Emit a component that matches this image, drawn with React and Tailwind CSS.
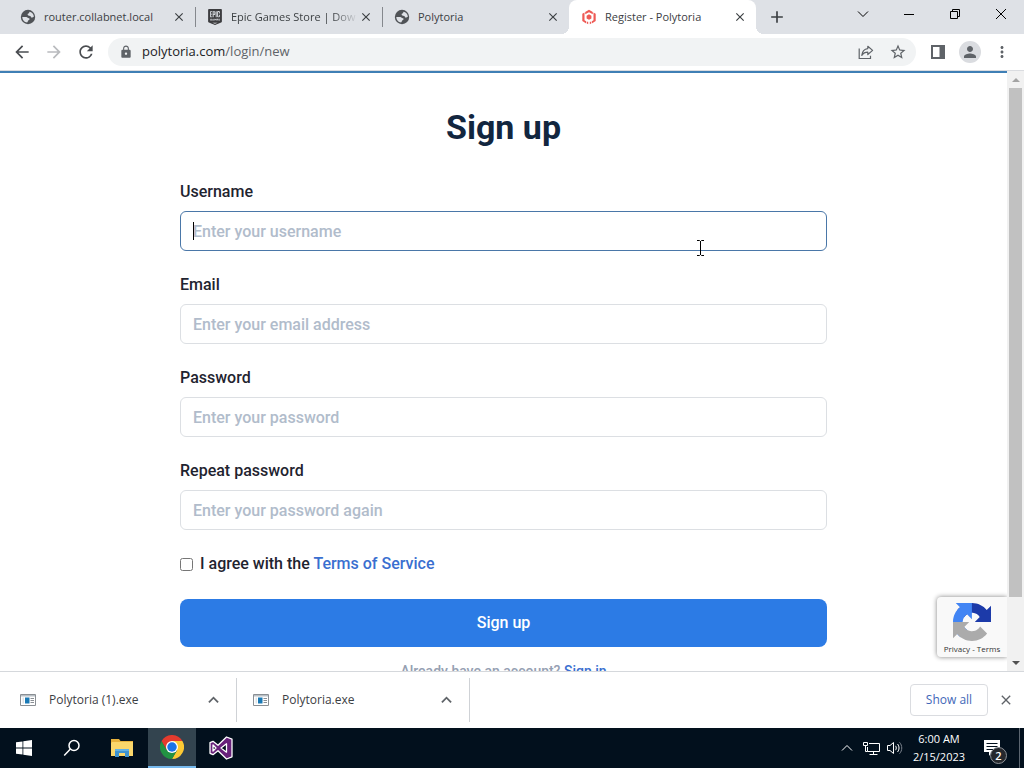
import { useState } from 'react'
import clsx from 'clsx'
import {
  MdArrowBack,
  MdArrowForward,
  MdRefresh,
  MdLock,
  MdStarBorder,
  MdMoreVert,
  MdClose,
  MdPerson,
  MdAdd,
} from 'react-icons/md'
import { SiEpicgames } from 'react-icons/si'

const GlobeIcon = () => (
  <svg viewBox="0 0 16 16" className="size-4 shrink-0" aria-hidden="true">
    <circle cx="8" cy="8" r="7.2" fill="#505357" />
    <path d="M9.300 2.800c2.500.4 4.300 2.300 4.600 4.700-.9.700-1.500 1.300-2.600 1-.6-.6-.2-1.300-1.200-1.600-1.200-.2-2.600-.4-2.500-1.600.1-1 1.400-.8 1.600-1.300z" fill="#dee1e6" />
    <path d="M2.300 8h3.900c1.300.1 1.600 1.200 2.700 1.300 1 .2.900 1.500-.1 1.700-1 .3-.6 1.500-1.700 2.500C4.500 13.200 2.300 11 2.300 8z" fill="#dee1e6" />
  </svg>
)

const PolytoriaIcon = () => (
  <svg viewBox="0 0 16 16" className="size-4 shrink-0" fill="#ee5a55" aria-hidden="true">
    <path d="M8 .8 11.800 3v2.300L8 3.200 4.200 5.300V3z" />
    <path d="M3.500 3.500v7.700l1.700 1v2.200L1.300 12V4.700zM12.500 3.500l2.200 1.200V12l-3.900 2.400v-2.200l1.700-1z" />
    <path d="M8 5.300 10.400 6.700v2.700L8 10.800 5.600 9.400V6.700z" />
    <path d="M5.900 12.700h1.300v2.500l-1.300-.7zM8.800 12.700h1.300v1.800l-1.300.7z" />
  </svg>
)

const ShareIcon = () => (
  <svg viewBox="0 0 16 16" className="size-4" fill="none" stroke="#5f6368" strokeWidth="1.2" aria-hidden="true">
    <path d="M1.2 4.500v10h11.300v-2.700" />
    <path d="M9.800 2.300 14.600 6.400 9.800 10.500V8.200C7 8.200 5.200 9.200 3.800 11.400 4.200 7.600 6.200 5 9.800 4.600z" strokeLinejoin="round" />
  </svg>
)

const SidePanelIcon = () => (
  <svg viewBox="0 0 14 14" className="size-3.5" aria-hidden="true">
    <path d="M1 1h12v12H1z" fill="none" stroke="#5f6368" strokeWidth="2" />
    <path d="M8.500 1H13v12H8.500z" fill="#5f6368" />
  </svg>
)

const ExeIcon = () => (
  <svg viewBox="0 0 16 16" className="size-4 shrink-0" aria-hidden="true">
    <path d="M.5 2.500h15v11H.5z" fill="#fff" stroke="#8a8f94" />
    <path d="M1 3h14v1.500H1z" fill="#b9bfc4" />
    <path d="M5 5.500h4.500v6H5z" fill="#1979b5" />
    <path d="M2.500 5.500H4v6H2.500z" fill="#dfe3e6" />
    <path d="M10.500 6.500h3.500M10.500 8.500h3.500M10.500 10.500h3.500" stroke="#8a8f94" />
  </svg>
)

const RecaptchaIcon = () => (
  <svg viewBox="0 0 64 64" className="size-[38px]" aria-hidden="true">
    <path
      fill="#1c3aa9"
      d="M64 31.955l-.033-1.370V4.687l-7.160 7.160C50.948 4.674 42.033.093 32.050.093c-10.400 0-19.622 4.960-25.458 12.640l11.736 11.860a15.550 15.550 0 0 1 4.754-5.334c2.050-1.600 4.952-2.906 8.968-2.906.485 0 .860.057 1.135.163 4.976.393 9.288 3.140 11.828 7.124l-8.307 8.307L64 31.953"
    />
    <path
      fill="#4285f4"
      d="M31.862.094l-1.370.033H4.594l7.160 7.160C4.580 13.147 0 22.060 0 32.046c0 10.400 4.960 19.622 12.640 25.458L24.500 45.768a15.550 15.550 0 0 1-5.334-4.754c-1.600-2.050-2.906-4.952-2.906-8.968 0-.485.057-.860.163-1.135.393-4.976 3.140-9.288 7.124-11.828l8.307 8.307L31.860.095"
    />
    <path
      fill="#ababab"
      d="M.001 32.045l.033 1.370v25.898l7.160-7.160c5.860 7.173 14.774 11.754 24.760 11.754 10.400 0 19.622-4.960 25.458-12.640l-11.736-11.860a15.550 15.550 0 0 1-4.754 5.334c-2.050 1.600-4.952 2.906-8.968 2.906-.485 0-.860-.057-1.135-.163-4.976-.393-9.288-3.140-11.828-7.124l8.307-8.307c-10.522.040-22.400.066-27.295-.005"
    />
  </svg>
)

const StartIcon = () => (
  <svg viewBox="0 0 16 16" className="size-4" fill="#fff" aria-hidden="true">
    <path d="M0 2.300 6.500 1.400v6.200H0zM7.300 1.300 16 0v7.600H7.300zM0 8.400h6.500v6.200L0 13.700zM7.300 8.400H16V16l-8.700-1.300z" />
  </svg>
)

const SearchIcon = () => (
  <svg viewBox="0 0 18 18" className="size-[18px]" fill="none" stroke="#fff" strokeWidth="1.500" aria-hidden="true">
    <circle cx="11" cy="6.500" r="5" />
    <path d="M7.400 10.100 1.200 16.500" />
  </svg>
)

const ExplorerIcon = () => (
  <svg viewBox="0 0 22 20" className="h-5 w-[22px]" aria-hidden="true">
    <path d="M0 1h8l1.500 2H22v15H0z" fill="#e8b23c" />
    <path d="M1 4h21v14H0V5z" fill="#fbd76b" />
    <path d="M4 11h14v8h-4v-4H8v4H4z" fill="#3f93cf" />
    <path d="M4 11h14v2H4z" fill="#62b1e4" />
  </svg>
)

const ChromeIcon = () => (
  <svg viewBox="0 0 48 48" className="size-6" aria-hidden="true">
    <path d="M24 12h20.800A24 24 0 0 1 24 48l10.400-18z" fill="#fcc934" />
    <path d="M3.200 12 13.600 30 24 36l10.400-6L24 48A24 24 0 0 1 3.200 12z" fill="#229342" />
    <path d="M3.200 12A24 24 0 0 1 44.800 12H24L13.600 30z" fill="#e33b2e" />
    <circle cx="24" cy="24" r="12" fill="#fff" />
    <circle cx="24" cy="24" r="9.500" fill="#1a73e8" />
  </svg>
)

const VisualStudioIcon = () => (
  <svg viewBox="0 0 24 24" className="size-6" aria-hidden="true">
    <path
      d="M17.500 1 9 9.300 4 5.300 1 6.700v10.600l3 1.400 5-4L17.500 23l5.500-2.200V3.200zM4 9l3 3-3 3zM17.500 7.800v8.400L12 12z"
      fill="#68217a"
      fillRule="evenodd"
      stroke="#fff"
      strokeWidth="1.300"
      strokeLinejoin="round"
    />
  </svg>
)

const NetworkIcon = () => (
  <svg viewBox="0 0 17 16" className="h-4 w-[17px]" fill="none" stroke="#fff" aria-hidden="true">
    <path d="M6 3.500h10.500v8h-12V7M10.500 11.500v3M6.500 14.500h8" />
    <path d="M.5 2.500h4v3h-4zM2.500 5.500v6h2" />
  </svg>
)

const SpeakerIcon = () => (
  <svg viewBox="0 0 16 16" className="size-4" fill="none" stroke="#fff" aria-hidden="true">
    <path d="M.5 5.500h2.500L6.500 2.500v11L3 10.500H.5z" />
    <path d="M8.500 5.800c1 1.300 1 3.100 0 4.400M10.500 4c2 2.300 2 5.700 0 8" />
    <path d="M12.500 2.300c3 3.200 3 8.200 0 11.400" stroke="#7b828c" />
  </svg>
)

const Chevron = ({ down, className }) => (
  <svg viewBox="0 0 12 8" className={clsx('h-2 w-3', className)} fill="none" stroke="currentColor" aria-hidden="true">
    <path d={down ? 'M1 1.500l5 5 5-5' : 'M1 6.500l5-5 5 5'} />
  </svg>
)

const tabs = [
  { title: 'router.collabnet.local', icon: <GlobeIcon /> },
  { title: 'Epic Games Store | Dow', icon: <SiEpicgames className="size-4 shrink-0 text-[#3c3c3f]" />, fade: true },
  { title: 'Polytoria', icon: <GlobeIcon /> },
  { title: 'Register - Polytoria', icon: <PolytoriaIcon />, active: true },
]

const fields = [
  { id: 'username', label: 'Username', type: 'text', placeholder: 'Enter your username' },
  { id: 'email', label: 'Email', type: 'email', placeholder: 'Enter your email address' },
  { id: 'password', label: 'Password', type: 'password', placeholder: 'Enter your password' },
  { id: 'repeat', label: 'Repeat password', type: 'password', placeholder: 'Enter your password again' },
]

const downloads = ['Polytoria (1).exe', 'Polytoria.exe']

const Tab = ({ tab, index }) => (
  <div
    className={clsx(
      'relative flex w-[187px] shrink-0 items-center pr-2 pl-3',
      tab.active && 'rounded-t-lg bg-white'
    )}
  >
    <button className="flex min-w-0 flex-1 items-center gap-2 text-left">
      {tab.icon}
      <span
        className={clsx(
          'flex-1 overflow-hidden text-[11px] leading-4 whitespace-nowrap',
          tab.fade && '[mask-image:linear-gradient(to_right,black_80%,transparent)]'
        )}
      >
        {tab.title}
      </span>
    </button>
    <button aria-label="Close tab" className="flex size-4 shrink-0 items-center justify-center">
      <MdClose className="size-3.5 text-[#3c4043]" />
    </button>
    {index < 2 && <span className="absolute -right-px h-5 w-px bg-[#85888d]" />}
    {tab.active && (
      <>
        <span className="absolute bottom-0 -left-2 size-2 bg-[radial-gradient(circle_at_top_left,transparent_8px,white_8px)]" />
        <span className="absolute -right-2 bottom-0 size-2 bg-[radial-gradient(circle_at_top_right,transparent_8px,white_8px)]" />
      </>
    )}
  </div>
)

function App() {
  const [values, setValues] = useState({ username: '', email: '', password: '', repeat: '' })
  const [agree, setAgree] = useState(false)

  const changeValue = (id, value) => {
    setValues({ ...values, [id]: value })
  }

  return (
    <div className="flex h-screen flex-col overflow-hidden bg-white font-['Open_Sans','Noto_Sans',sans-serif] text-xs text-[#3c4043]">
      <header className="shrink-0">
        <div className="flex h-[34px] justify-between bg-[#dee1e6]">
          <nav className="flex pl-2">
            {tabs.map((tab, index) => (
              <Tab key={tab.title} tab={tab} index={index} />
            ))}
            <button aria-label="New tab" className="flex w-[42px] items-center justify-center">
              <MdAdd className="size-5" />
            </button>
          </nav>
          <div className="flex h-7 text-black">
            <button aria-label="Search tabs" className="flex w-[46px] items-center justify-center">
              <Chevron down />
            </button>
            <button aria-label="Minimize" className="flex w-[46px] items-center justify-center">
              <span className="h-px w-2.5 bg-black" />
            </button>
            <button aria-label="Restore" className="flex w-[46px] items-center justify-center">
              <svg viewBox="0 0 10 10" className="size-2.5" fill="none" stroke="currentColor">
                <path d="M.5 2.500h7v7h-7zM2.500 2.500v-2h7v7h-2" />
              </svg>
            </button>
            <button aria-label="Close" className="flex w-[46px] items-center justify-center">
              <svg viewBox="0 0 12 12" className="size-3" fill="none" stroke="currentColor">
                <path d="M1 1l10 10M11 1 1 11" />
              </svg>
            </button>
          </div>
        </div>

        <div className="flex items-center gap-1.5 border-b border-[#dadce0] px-1.5 py-1 text-[#5f6368]">
          <div className="flex">
            <button aria-label="Back" className="flex w-8 justify-center text-[#4a4d51]">
              <MdArrowBack className="size-5" />
            </button>
            <button aria-label="Forward" className="flex w-8 justify-center text-[#b9bbbe]">
              <MdArrowForward className="size-5" />
            </button>
            <button aria-label="Reload" className="flex w-8 justify-center text-[#4a4d51]">
              <MdRefresh className="size-5" />
            </button>
          </div>
          <div className="flex h-7 flex-1 items-center rounded-full bg-[#f1f3f4] pr-0.5 pl-2.5">
            <MdLock className="mr-2 size-4 p-px" />
            <p className="flex-1 text-[13px]">
              <span className="text-[#202124]">polytoria.com</span>/login/new
            </p>
            <button aria-label="Share" className="flex w-8 justify-center">
              <ShareIcon />
            </button>
            <button aria-label="Bookmark" className="flex w-8 justify-center">
              <MdStarBorder className="size-[18px]" />
            </button>
          </div>
          <div className="flex items-center">
            <button aria-label="Side panel" className="flex w-8 justify-center">
              <SidePanelIcon />
            </button>
            <button aria-label="Profile" className="flex w-8 justify-center">
              <span className="flex size-[22px] items-center justify-center rounded-full bg-[#dadce0]">
                <MdPerson className="size-[18px]" />
              </span>
            </button>
            <button aria-label="Menu" className="flex w-8 justify-center">
              <MdMoreVert className="size-[18px]" />
            </button>
          </div>
        </div>
      </header>

      <div className="flex min-h-0 flex-1">
        <main className="relative flex-1 overflow-hidden border-t-2 border-[#3f7fb5] px-6 pt-[34px] font-['Roboto','Inter',sans-serif] text-base font-medium text-[#1f2430]">
          <form className="mx-auto max-w-[647px]" onSubmit={(e) => e.preventDefault()}>
            <h1 className="mb-[33px] text-center text-[34px] leading-10 font-bold text-[#12263f]">Sign up</h1>
            {fields.map((field) => (
              <div key={field.id} className="mb-[22px]">
                <label htmlFor={field.id} className="mb-[7px] block">
                  {field.label}
                </label>
                <div className="relative">
                  <input
                    id={field.id}
                    type={field.type}
                    placeholder={field.placeholder}
                    value={values[field.id]}
                    onChange={(e) => changeValue(field.id, e.target.value)}
                    className={clsx(
                      'block h-10 w-full rounded-md border bg-white px-3 outline-none placeholder:text-[#b1bccb]',
                      field.id === 'username' ? 'border-[#4a77a8]' : 'border-[#dcdfe3]'
                    )}
                  />
                  {field.id === 'username' && <span className="absolute top-[11px] left-[13px] h-[18px] w-px bg-black" />}
                </div>
              </div>
            ))}
            <div className="mb-[23px] flex items-center">
              <input
                id="agree"
                type="checkbox"
                checked={agree}
                onChange={(e) => setAgree(e.target.checked)}
                className="mr-[7px] size-[13px]"
              />
              <label htmlFor="agree">
                I agree with the{' '}
                <a href="#terms" className="text-[#3a6fd0]">
                  Terms of Service
                </a>
              </label>
            </div>
            <button type="submit" className="block h-12 w-full rounded-lg bg-[#2c7be5] text-white">
              Sign up
            </button>
            <p className="mt-3.5 text-center text-sm text-[#95a0b2]">
              Already have an account?{' '}
              <a href="#login" className="text-[#3a6fd0]">
                Sign in
              </a>
            </p>
          </form>

          <svg viewBox="0 0 9 16" className="absolute top-[167px] left-[696px] h-4 w-[9px]" fill="none" stroke="#000" aria-hidden="true">
            <path d="M1 .5h2.500l1 1 1-1H8M4.500 1v14M1 15.500h2.500l1-1 1 1H8" />
          </svg>

          <aside className="absolute right-0 bottom-3.5 flex h-[60px] w-[70px] flex-col items-center rounded-l-sm bg-[#f9f9f9] pt-1.5 shadow-[0_0_5px_gray]">
            <RecaptchaIcon />
            <p className="mt-0.5 font-['Open_Sans',sans-serif] text-[8px] leading-3 font-normal whitespace-nowrap text-[#333]">
              <a href="#privacy">Privacy</a> - <a href="#tos">Terms</a>
            </p>
          </aside>
        </main>

        <div className="flex w-[17px] shrink-0 flex-col items-center bg-[#f1f1f1]">
          <button aria-label="Scroll up" className="flex h-[17px] items-center">
            <svg viewBox="0 0 8 4" className="h-1 w-2" fill="#a3a3a3">
              <path d="M0 4 4 0l4 4z" />
            </svg>
          </button>
          <div className="w-full flex-1 px-0.5">
            <div className="h-[90%] bg-[#c1c1c1]" />
          </div>
          <button aria-label="Scroll down" className="flex h-[17px] items-center">
            <svg viewBox="0 0 8 4" className="h-1 w-2" fill="#505050">
              <path d="M0 0l4 4 4-4z" />
            </svg>
          </button>
        </div>
      </div>

      <section className="flex h-[57px] shrink-0 items-center border-t border-[#d5d8dc] pl-1">
        {downloads.map((name) => (
          <div key={name} className="flex h-11 w-[233px] items-center border-r border-[#cfd2d6] pr-[15px] pl-4">
            <button className="flex flex-1 items-center gap-[13px] text-left">
              <ExeIcon />
              {name}
            </button>
            <button aria-label="Download options" className="flex size-4 items-center justify-center text-[#5f6368]">
              <Chevron className="w-[11px] stroke-2" />
            </button>
          </div>
        ))}
        <button className="mr-2.5 ml-auto h-8 w-[78px] rounded border border-[#dadce0] text-[#3f67b8]">Show all</button>
        <button aria-label="Close downloads" className="mr-2.5">
          <MdClose className="size-4 text-[#5f6368]" />
        </button>
      </section>

      <footer className="flex h-10 shrink-0 justify-between bg-[#02101d] text-white">
        <div className="flex">
          <button aria-label="Start" className="flex w-12 items-center justify-center">
            <StartIcon />
          </button>
          <button aria-label="Search" className="flex w-12 items-center justify-center">
            <SearchIcon />
          </button>
          <button aria-label="File Explorer" className="flex w-[52px] items-center justify-center">
            <ExplorerIcon />
          </button>
          <button aria-label="Chrome" className="flex w-12 items-center justify-center border-b-2 border-[#76b9ed] bg-[#33444f]">
            <ChromeIcon />
          </button>
          <button aria-label="Visual Studio" className="flex w-[50px] items-center justify-center">
            <VisualStudioIcon />
          </button>
        </div>
        <div className="flex items-center">
          <button aria-label="Hidden icons" className="flex w-6 justify-center">
            <Chevron />
          </button>
          <button aria-label="Network" className="flex w-6 justify-center">
            <NetworkIcon />
          </button>
          <button aria-label="Volume" className="flex w-6 justify-center">
            <SpeakerIcon />
          </button>
          <button className="w-16 text-center text-[11px] leading-[18px]">
            6:00 AM
            <br />
            2/15/2023
          </button>
          <button aria-label="Notifications" className="relative mr-1.5 flex h-full w-[42px] items-center justify-center">
            <svg viewBox="0 0 16 16" className="size-4" aria-hidden="true">
              <path d="M0 0h16v12H8l-3 4v-4H0z" fill="#fff" />
              <path d="M2.500 3.500h11M2.500 6.500h11M2.500 9.500h7" stroke="#02101d" />
            </svg>
            <span className="absolute right-1.5 bottom-1 flex size-[17px] items-center justify-center rounded-full border border-[#8d9298] bg-[#25282d] text-[11px] leading-none font-semibold">
              2
            </span>
          </button>
          <span className="mr-1 h-full w-px bg-[#5b6570]" />
        </div>
      </footer>
    </div>
  )
}

export default App
